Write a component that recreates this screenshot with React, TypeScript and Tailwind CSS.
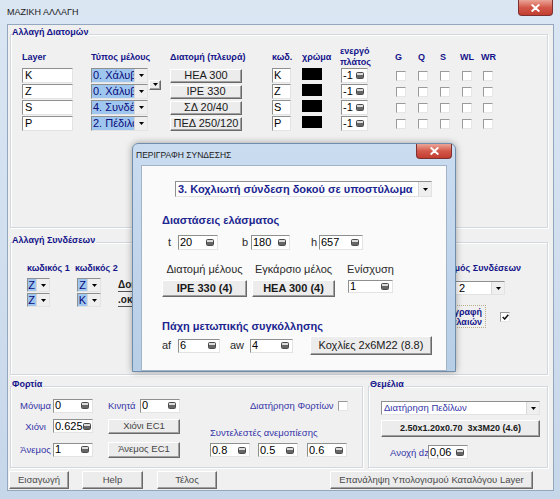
import type { ReactNode } from "react";

const field =
  "border border-t-[#8e8f8f] border-l-[#8e8f8f] border-r-[#e3e3e3] border-b-[#e3e3e3] bg-white";
const btn3d =
  "flex items-center justify-center whitespace-nowrap border border-t-white border-l-white border-r-[#696969] border-b-[#696969] bg-[#ececec] shadow-[inset_-1px_-1px_0_#a0a0a0]";
const blueLabel = "text-[9.5px] leading-[11px] text-[#3434a8] whitespace-nowrap";
const headLabel = "text-[9px] font-bold leading-[11px] text-[#14148a] whitespace-nowrap";

function Arrow() {
  return (
    <svg width="5" height="3" viewBox="0 0 5 3">
      <path d="M0 0h5L2.5 3z" fill="#000" />
    </svg>
  );
}

function DropBtn() {
  return (
    <span className="flex h-full w-[13px] shrink-0 items-center justify-center border-l border-[#d8d8d8] bg-[#efefef]">
      <Arrow />
    </span>
  );
}

function SpinIcon() {
  return (
    <span className="flex h-[7px] w-[8px] shrink-0 flex-col overflow-hidden rounded-[1.5px] border border-[#4a4a4a] bg-[#b8b8b8]">
      <span className="h-[2px] bg-[#dcdcdc]" />
      <span className="flex-1 bg-[#666]" />
    </span>
  );
}

function SpinBox({ value, className }: { value: string; className: string }) {
  return (
    <div
      className={`flex items-center justify-between pl-[1px] pr-[3px] text-[11px] leading-none text-black ${field} ${className}`}
    >
      <span>{value}</span>
      <SpinIcon />
    </div>
  );
}

function Check({ checked = false, className = "" }: { checked?: boolean; className?: string }) {
  return (
    <span
      className={`flex h-[10px] w-[10px] shrink-0 items-center justify-center border border-t-[#9a9a9a] border-l-[#9a9a9a] border-r-[#e6e6e6] border-b-[#e6e6e6] bg-white ${className}`}
    >
      {checked ? (
        <svg width="7" height="6" viewBox="0 0 7 6">
          <path d="M0.7 3l2 2L6.3 0.7" stroke="#111" strokeWidth="1.5" fill="none" />
        </svg>
      ) : null}
    </span>
  );
}

function CloseBtn({ className }: { className: string }) {
  return (
    <div
      className={`flex shrink-0 items-center justify-center rounded-b-[4px] border border-t-0 border-[#7d3030] bg-gradient-to-b from-[#eaa597] via-[#d3584a] to-[#c23d30] ${className}`}
    >
      <svg width="9" height="8" viewBox="0 0 9 8">
        <path d="M1.2 1l6.6 6M7.8 1L1.2 7" stroke="#fff" strokeWidth="1.8" strokeLinecap="round" />
      </svg>
    </div>
  );
}

function Group({ title, className, children }: { title: string; className: string; children?: ReactNode }) {
  return (
    <div className={`relative border border-[#d3d8de] shadow-[inset_1px_1px_0_#fff,1px_1px_0_#fff] ${className}`}>
      <span className={`absolute left-[1px] top-[-8px] bg-[#f0f0f0] pr-[1px] ${headLabel}`}>{title}</span>
      {children}
    </div>
  );
}

const layerRows = [
  { layer: "K", type: "0. Χάλυβας", section: "HEA 300" },
  { layer: "Z", type: "0. Χάλυβας", section: "IPE 330" },
  { layer: "S", type: "4. Συνδέσεις", section: "ΣΔ 20/40" },
  { layer: "P", type: "2. Πέδιλα", section: "ΠΕΔ 250/120" },
];

function SmallCombo({ text, className }: { text: string; className: string }) {
  return (
    <div className={`flex h-[14px] ${field} ${className}`}>
      <span className="flex-1 overflow-hidden whitespace-nowrap bg-[#9fc6ee] pr-[1px] text-right text-[11px] leading-[12px] text-[#0b0b7a]">
        {text}
      </span>
      <DropBtn />
    </div>
  );
}

export default function App() {
  return (
    <div className="relative h-[499px] w-[560px] overflow-hidden bg-gradient-to-b from-[#dbe6f3] to-[#c6d7ea] font-['Liberation_Sans',Arial,sans-serif]">
      {/* title bar */}
      <div className="flex h-[24px] items-start pl-[7px]">
        <span className="mt-[6px] text-[9px] leading-[12px] text-[#1b1b1b]">ΜΑΖΙΚΗ ΑΛΛΑΓΗ</span>
        <CloseBtn className="ml-auto mr-[7px] h-[16px] w-[35px]" />
      </div>

      {/* client area */}
      <div className="ml-[7px] flex h-[467px] w-[547px] flex-col border border-[#93a7be] bg-[#f0f0f0]">
        {/* Αλλαγή Διατομών */}
        <Group title="Αλλαγή Διατομών" className="ml-[2px] mt-[9px] h-[194px] w-[538px] shrink-0">
          <div className="mt-[12px] flex h-[20px] items-center">
            <span className={`ml-[11px] w-[51px] ${headLabel}`}>Layer</span>
            <span className={`ml-[18px] w-[69px] ${headLabel}`}>Τύπος μέλους</span>
            <span className={`ml-[10px] w-[72px] ${headLabel}`}>Διατομή (πλευρά)</span>
            <span className={`ml-[30px] w-[19px] ${headLabel}`}>κωδ.</span>
            <span className={`ml-[11px] w-[20px] ${headLabel}`}>χρώμα</span>
            <span className={`ml-[18px] flex w-[28px] flex-col ${headLabel}`}>
              <span>ενεργό</span>
              <span>πλάτος</span>
            </span>
            <span className={`ml-[27px] w-[10px] ${headLabel}`}>G</span>
            <span className={`ml-[13px] w-[10px] ${headLabel}`}>Q</span>
            <span className={`ml-[12px] w-[10px] ${headLabel}`}>S</span>
            <span className={`ml-[10px] w-[14px] ${headLabel}`}>WL</span>
            <span className={`ml-[7px] ${headLabel}`}>WR</span>
          </div>

          <div className="mt-[1px] flex flex-col gap-[1px]">
            {layerRows.map((row, i) => (
              <div key={row.layer} className="flex h-[15px] items-center">
                <div className={`ml-[11px] h-full w-[51px] pl-[2px] text-[11px] leading-[13px] text-black ${field}`}>
                  {row.layer}
                </div>
                <div className={`ml-[18px] flex h-full w-[57px] ${field}`}>
                  <span className="flex-1 overflow-hidden whitespace-nowrap bg-[#9fc6ee] pl-[1px] text-[11px] leading-[13px] text-[#0b0b7a]">
                    {row.type}
                  </span>
                  <DropBtn />
                </div>
                {i === 0 ? (
                  <div className={`ml-[1px] mt-[18px] h-[10px] w-[12px] ${btn3d}`}>
                    <Arrow />
                  </div>
                ) : (
                  <div className="ml-[1px] w-[12px]" />
                )}
                <div className={`ml-[9px] h-[14px] w-[72px] text-[11px] text-[#1a1a1a] ${btn3d}`}>{row.section}</div>
                <div className={`ml-[30px] h-full w-[19px] pl-[1px] text-[11px] leading-[13px] text-black ${field}`}>
                  {row.layer}
                </div>
                <div className="ml-[11px] h-[12px] w-[20px] self-start bg-black" />
                <SpinBox value="-1" className="ml-[19px] h-full w-[27px]" />
                <Check className="ml-[28px]" />
                <Check className="ml-[12px]" />
                <Check className="ml-[12px]" />
                <Check className="ml-[12px]" />
                <Check className="ml-[11px]" />
              </div>
            ))}
          </div>
        </Group>

        {/* Αλλαγή Συνδέσεων */}
        <Group title="Αλλαγή Συνδέσεων" className="ml-[2px] mt-[14px] flex h-[133px] w-[538px] shrink-0 items-start">
          <div className="ml-[16px] mt-[20px] flex">
            <div className="flex w-[48px] flex-col">
              <span className={headLabel}>κωδικός 1</span>
              <div className="mt-[4px] flex flex-col gap-[1px]">
                <SmallCombo text="Z" className="w-[23px]" />
                <SmallCombo text="Z" className="w-[23px]" />
              </div>
            </div>
            <div className="flex w-[43px] flex-col">
              <span className={headLabel}>κωδικός 2</span>
              <div className="ml-[2px] mt-[4px] flex flex-col gap-[1px]">
                <SmallCombo text="Z" className="w-[24px]" />
                <SmallCombo text="K" className="w-[24px]" />
              </div>
            </div>
            <div className="mt-[17px] flex flex-col gap-[3px] text-[10px] font-bold leading-[10px] text-[#222]">
              <span className="border-b border-[#555] pb-[1px]">Δοκοί</span>
              <span className="border-b border-[#555] pb-[1px]">.οκ</span>
            </div>
          </div>

          <div className="ml-auto mr-[26px] mt-[20px] flex w-[101px] flex-col">
            <span className={`text-right ${headLabel}`}>Αριθμός Συνδέσεων</span>
            <div className={`ml-[35px] mt-[7px] flex h-[14px] w-[50px] ${field}`}>
              <span className="flex-1 pl-[3px] text-[11px] leading-[12px] text-black">2</span>
              <DropBtn />
            </div>
            <div className="mt-[10px] flex items-center">
              <div className="flex h-[23px] w-[66px] flex-col items-end justify-center border border-dotted border-[#b9ae8a] bg-[#f0f0f0] pr-[3px] text-[9px] font-bold leading-[10px] text-[#14148a]">
                <span>Περιγραφή</span>
                <span>Κεφαλαιών</span>
              </div>
              <Check checked className="ml-[14px]" />
            </div>
          </div>
        </Group>

        {/* Φορτία / Θεμέλια */}
        <div className="mt-[11px] flex h-[82px] shrink-0">
          <Group title="Φορτία" className="ml-[2px] h-full w-[353px]">
            <div className="mt-[11px] flex h-[15px] items-center">
              <span className={`ml-[7px] w-[35px] text-center ${blueLabel}`}>Μόνιμα</span>
              <SpinBox value="0" className="h-[14px] w-[40px]" />
              <span className={`ml-[15px] w-[32px] ${blueLabel}`}>Κινητά</span>
              <SpinBox value="0" className="h-[14px] w-[40px]" />
              <span className={`ml-[70px] w-[80px] text-right ${blueLabel}`}>Διατήρηση Φορτίων</span>
              <Check className="ml-[8px]" />
            </div>
            <div className="mt-[6px] flex">
              <div className="flex flex-col gap-[9px]">
                <div className="flex h-[14px] items-center">
                  <span className={`ml-[7px] w-[35px] text-center ${blueLabel}`}>Χιόνι</span>
                  <SpinBox value="0.625" className="h-[14px] w-[40px]" />
                  <div className={`ml-[15px] h-[15px] w-[72px] text-[9.5px] text-[#444] ${btn3d}`}>Χιόνι EC1</div>
                </div>
                <div className="flex h-[15px] items-center">
                  <span className={`ml-[7px] w-[35px] text-center ${blueLabel}`}>Άνεμος</span>
                  <SpinBox value="1" className="h-[14px] w-[40px]" />
                  <div className={`ml-[15px] h-[16px] w-[72px] text-[9.5px] text-[#444] ${btn3d}`}>Άνεμος EC1</div>
                </div>
              </div>
              <div className="ml-[30px] mt-[8px] flex flex-col">
                <span className={blueLabel}>Συντελεστές ανεμοπίεσης</span>
                <div className="mt-[5px] flex">
                  <SpinBox value="0.8" className="h-[14px] w-[40px]" />
                  <SpinBox value="0.5" className="ml-[8px] h-[14px] w-[40px]" />
                  <SpinBox value="0.6" className="ml-[9px] h-[14px] w-[40px]" />
                </div>
              </div>
            </div>
          </Group>

          <Group title="Θεμέλια" className="ml-[5px] flex h-full w-[180px] flex-col">
            <div className={`ml-[12px] mt-[14px] flex h-[14px] w-[159px] ${field}`}>
              <span className="flex-1 pl-[2px] text-[9.5px] leading-[12px] text-[#3434a8]">Διατήρηση Πεδίλων</span>
              <DropBtn />
            </div>
            <div className={`ml-[12px] mt-[5px] h-[17px] w-[159px] whitespace-pre text-[9px] font-bold text-[#1a1a1a] ${btn3d}`}>
              {"2.50x1.20x0.70  3x3M20 (4.6)"}
            </div>
            <div className="mt-[8px] flex h-[14px] items-center">
              <span className={`ml-[21px] w-[38px] ${blueLabel}`}>Ανοχή dz</span>
              <SpinBox value="0,06" className="h-[14px] w-[40px]" />
            </div>
          </Group>
        </div>

        {/* bottom buttons */}
        <div className="mt-[3px] flex h-[18px] shrink-0 text-[9.5px] text-[#4a4a4a]">
          <div className={`ml-[1px] w-[60px] ${btn3d}`}>Εισαγωγή</div>
          <div className={`ml-[13px] w-[61px] ${btn3d}`}>Help</div>
          <div className={`ml-[14px] w-[60px] ${btn3d}`}>Τέλος</div>
          <div className={`ml-[113px] w-[203px] ${btn3d}`}>Επανάληψη Υπολογισμού Καταλόγου Layer</div>
        </div>
      </div>

      {/* dialog ΠΕΡΙΓΡΑΦΗ ΣΥΝΔΕΣΗΣ */}
      <div className="absolute left-[132px] top-[143px] flex h-[229px] w-[324px] flex-col rounded-t-[6px] border border-[#6f8cab] bg-gradient-to-b from-[#cadcf0] to-[#b7cee7] shadow-[0_0_7px_rgba(0,0,0,0.35)]">
        <div className="flex h-[21px] shrink-0 items-start">
          <span className="ml-[3px] mt-[6px] text-[8.5px] leading-[11px] text-[#1b1b1b]">ΠΕΡΙΓΡΑΦΗ ΣΥΝΔΕΣΗΣ</span>
          <CloseBtn className="ml-auto mr-[3px] h-[15px] w-[36px]" />
        </div>
        <div className="ml-[8px] flex h-[207px] w-[306px] flex-col border border-[#a3b4c6] bg-[#fafafa] pl-[20px] text-[11px] text-[#2a2a2a]">
          <div className={`ml-[13px] mt-[15px] flex h-[16px] w-[257px] shrink-0 ${field}`}>
            <span className="flex-1 whitespace-nowrap pl-[2px] text-[11px] font-bold leading-[14px] text-[#1b2690]">
              3. Κοχλιωτή σύνδεση δοκού σε υποστύλωμα
            </span>
            <DropBtn />
          </div>

          <span className="mt-[17px] text-[11px] font-bold leading-[12px] text-[#1b2690]">Διαστάσεις ελάσματος</span>

          <div className="mt-[9px] flex h-[15px] items-center leading-none">
            <span className="ml-[6px] w-[10px]">t</span>
            <SpinBox value="20" className="h-[15px] w-[40px]" />
            <span className="ml-[24px] w-[9px]">b</span>
            <SpinBox value="180" className="h-[15px] w-[39px]" />
            <span className="ml-[21px] w-[8px]">h</span>
            <SpinBox value="657" className="h-[15px] w-[44px]" />
          </div>

          <div className="mt-[13px] flex items-start">
            <div className="flex w-[85px] flex-col items-center">
              <span className="whitespace-nowrap leading-[12px]">Διατομή μέλους</span>
              <div className={`mt-[5px] h-[17px] w-full font-bold text-[#1a1a1a] ${btn3d}`}>IPE 330 (4)</div>
            </div>
            <div className="ml-[5px] flex w-[83px] flex-col items-center">
              <span className="whitespace-nowrap leading-[12px]">Εγκάρσιο μέλος</span>
              <div className={`mt-[5px] h-[17px] w-full font-bold text-[#1a1a1a] ${btn3d}`}>HEA 300 (4)</div>
            </div>
            <div className="ml-[13px] flex w-[45px] flex-col items-center">
              <span className="whitespace-nowrap leading-[12px]">Ενίσχυση</span>
              <SpinBox value="1" className="mt-[5px] h-[13px] w-full" />
            </div>
          </div>

          <span className="mt-[23px] text-[11px] font-bold leading-[12px] text-[#1b2690]">Πάχη μετωπικής συγκόλλησης</span>

          <div className="mt-[4px] flex h-[19px] items-center leading-none">
            <span className="w-[16px]">af</span>
            <SpinBox value="6" className="h-[14px] w-[42px]" />
            <span className="ml-[10px] w-[20px]">aw</span>
            <SpinBox value="4" className="h-[14px] w-[43px]" />
            <div className={`ml-[17px] h-[19px] w-[122px] text-[#1a1a1a] ${btn3d}`}>Κοχλίες 2x6M22 (8.8)</div>
          </div>
        </div>
      </div>
    </div>
  );
}
